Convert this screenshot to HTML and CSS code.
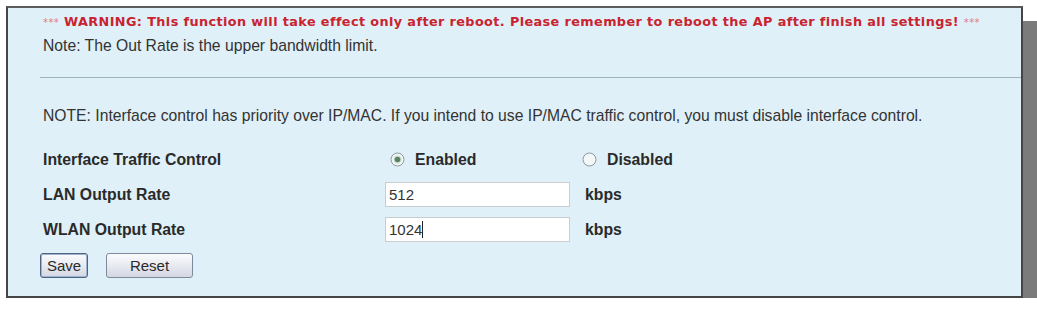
FILE: index.html
```html
<!DOCTYPE html>
<html>
<head>
<meta charset="utf-8">
<link rel="stylesheet" href="styles.css">
</head>
<body>
<div class="panel">
  <div class="head">
    <div class="warn"><span class="stars">***</span> WARNING: This function will take effect only after reboot. Please remember to reboot the AP after finish all settings! <span class="stars">***</span></div>
    <div class="note">Note: The Out Rate is the upper bandwidth limit.</div>
  </div>
  <div class="sep"></div>
  <div class="body">
    <div class="note note2">NOTE: Interface control has priority over IP/MAC. If you intend to use IP/MAC traffic control, you must disable interface control.</div>
    <div class="grid">
      <div class="label">Interface Traffic Control</div>
      <div class="radio">
        <svg width="15" height="15" viewBox="0 0 15 15"><circle cx="7.5" cy="7.5" r="6.5" fill="#f4f7f7" stroke="#8d9aa3" stroke-width="1"/><circle cx="7.5" cy="7.5" r="4.2" fill="#cfe3d3"/><circle cx="7.5" cy="7.5" r="2.8" fill="#5f7e66"/></svg>
        <span>Enabled</span>
      </div>
      <div class="radio">
        <svg width="15" height="15" viewBox="0 0 15 15"><circle cx="7.5" cy="7.5" r="6.5" fill="#f4f7f7" stroke="#8d9aa3" stroke-width="1"/></svg>
        <span>Disabled</span>
      </div>

      <div class="label">LAN Output Rate</div>
      <div class="field"><input class="input" type="text" value="512"></div>
      <div class="unit">kbps</div>

      <div class="label">WLAN Output Rate</div>
      <div class="field caret"><input class="input" type="text" value="1024"></div>
      <div class="unit">kbps</div>
    </div>
    <div class="buttons">
      <button class="btn btn-save">Save</button>
      <button class="btn btn-reset">Reset</button>
    </div>
  </div>
</div>
</body>
</html>
```
FILE: styles.css
```css
html, body {
  margin: 0;
  padding: 0;
  background: #ffffff;
}
body {
  padding: 6px 0 0 6px;
  font-family: "Liberation Sans", Arial, sans-serif;
  color: #2e2e2e;
}
.panel {
  width: 1013px;
  height: 288px;
  border: 2px solid #454545;
  border-top-color: #5c5c5c;
  background: #dff0f8;
  box-shadow: 15px 15px 0 #7b7b7b;
}
.head {
  padding: 4px 0 0 35px;
}
.warn {
  font-family: "DejaVu Sans", Verdana, sans-serif;
  font-size: 12.8px;
  font-weight: bold;
  letter-spacing: 0.4px;
  line-height: 20px;
  height: 20px;
  color: #c9232f;
  white-space: nowrap;
}
.stars {
  font-size: 10px;
  font-weight: normal;
  color: #e07c86;
}
.note {
  font-size: 15.7px;
  line-height: 20px;
  height: 20px;
  margin-top: 4px;
  color: #333;
  white-space: nowrap;
}
.sep {
  margin: 21px 0 0 32px;
  height: 1px;
  background: #9fb3bf;
}
.body {
  padding: 0 0 0 35px;
}
.note2 {
  margin-top: 28px;
}
.grid {
  display: grid;
  grid-template-columns: 342px 192px 1fr;
  grid-auto-rows: 35px;
  margin-top: 16px;
  align-items: center;
}
.label {
  font-size: 15.8px;
  font-weight: bold;
  color: #2a2a2a;
}
.radio {
  display: flex;
  align-items: center;
  gap: 10px;
  margin-left: 5px;
  font-size: 15.8px;
  font-weight: bold;
  color: #2a2a2a;
}
.radio svg {
  display: block;
  flex: none;
}
.field {
  position: relative;
  width: 185px;
  height: 25px;
}
.input {
  box-sizing: border-box;
  width: 185px;
  height: 25px;
  margin: 0;
  padding: 0 0 0 3px;
  border: 1px solid #c9cdd0;
  background: #ffffff;
  font-family: "Liberation Sans", Arial, sans-serif;
  font-size: 15px;
  color: #333;
  outline: none;
}
.caret::after {
  content: "";
  position: absolute;
  left: 37px;
  top: 4px;
  width: 1px;
  height: 17px;
  background: #222;
}
.unit {
  margin-left: 8px;
  font-size: 15.8px;
  font-weight: bold;
  color: #2a2a2a;
}
.buttons {
  display: flex;
  gap: 18px;
  margin-top: 6px;
  margin-left: -3px;
}
.btn {
  height: 25px;
  padding: 0;
  border: 1px solid #7d8a9c;
  border-radius: 3px;
  background: linear-gradient(#fbfbfd, #e6e8ef 55%, #d3d7e2);
  font-family: "Liberation Sans", Arial, sans-serif;
  font-size: 15px;
  color: #2a2a2a;
}
.btn-save {
  width: 48px;
  border-color: #4f6383;
  box-shadow: inset 0 0 0 1px #9fb2d0;
}
.btn-reset {
  width: 87px;
}
```
